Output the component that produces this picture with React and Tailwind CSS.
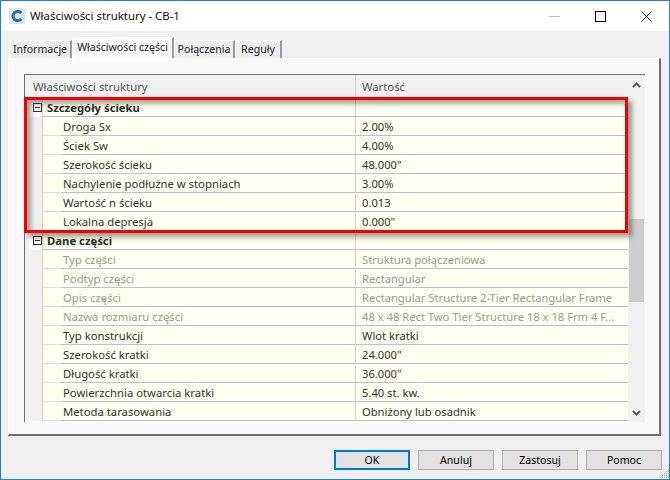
import React from 'react';

const detailRows = [
  ['Droga Sx', '2.00%'],
  ['Ściek Sw', '4.00%'],
  ['Szerokość ścieku', '48.000"'],
  ['Nachylenie podłużne w stopniach', '3.00%'],
  ['Wartość n ścieku', '0.013'],
  ['Lokalna depresja', '0.000"'],
];

const partRows = [
  ['Typ części', 'Struktura połączeniowa', true],
  ['Podtyp części', 'Rectangular', true],
  ['Opis części', 'Rectangular Structure 2-Tier Rectangular Frame', true],
  ['Nazwa rozmiaru części', '48 x 48 Rect Two Tier Structure 18 x 18 Frm 4 F...', true],
  ['Typ konstrukcji', 'Wlot kratki'],
  ['Szerokość kratki', '24.000"'],
  ['Długość kratki', '36.000"'],
  ['Powierzchnia otwarcia kratki', '5.40 st. kw.'],
  ['Metoda tarasowania', 'Obniżony lub osadnik'],
];

const tabs = [
  { label: 'Informacje', cls: 'w-[63px] h-[18px] ml-[1px] bg-[#eeeeee]' },
  { label: 'Właściwości części', cls: 'w-[102px] h-[21px] bg-[#f9f9f9]' },
  { label: 'Połączenia', cls: 'w-[61px] h-[18px] bg-[#eeeeee]' },
  { label: 'Reguły', cls: 'w-[47px] h-[18px] bg-[#eeeeee]' },
];

function GroupRow({ label }) {
  return (
    <div className="flex h-[19px]">
      <div className="w-[17px] flex justify-end bg-[#f0f0f0] shrink-0">
        <div className="w-[13px] flex items-center justify-end bg-[#fafafa]">
          <div className="w-[9px] h-[9px] border border-[#333] flex items-center justify-center">
            <div className="w-[5px] h-[1px] bg-[#333]" />
          </div>
        </div>
      </div>
      <div className="flex-1 min-w-0 flex border-b border-[#b9b9ff] bg-[#fffff0] border-l border-l-[#ffc0c0]">
        <div className="w-[312px] pl-[4px] pt-[1px] font-bold text-[#2b2b2b] leading-[18px]">{label}</div>
        <div className="flex-1 border-l border-[#ffc0c0]" />
      </div>
    </div>
  );
}

function PropRow({ name, value, dim }) {
  const text = dim ? 'text-[#9a9a9a]' : 'text-[#333]';
  return (
    <div className="flex h-[19px]">
      <div className="w-[17px] bg-[#f0f0f0] shrink-0" />
      <div className="flex-1 min-w-0 flex bg-[#fffff0] border-l border-[#ffc0c0]">
        <div className="w-[18px] border-b border-[#dcdcff] shrink-0" />
        <div className={`w-[294px] pl-[2px] pt-[1px] border-b border-[#b9b9ff] leading-[18px] whitespace-nowrap ${text}`}>{name}</div>
        <div className={`flex-1 min-w-0 border-l border-l-[#ffc0c0] border-b border-b-[#b9b9ff] pl-[6px] pt-[1px] text-[11.2px] leading-[18px] whitespace-nowrap overflow-hidden ${text}`}>{value}</div>
      </div>
    </div>
  );
}

function Chevron({ up }) {
  return (
    <svg width="9" height="6" viewBox="0 0 9 6" fill="none" stroke="#606060" strokeWidth="2">
      <path d={up ? 'M1 5 L4.5 1.5 L8 5' : 'M1 1 L4.5 4.5 L8 1'} />
    </svg>
  );
}

function DialogButton({ label, primary }) {
  const cls = primary
    ? 'border-2 border-[#0078d7]'
    : 'border border-[#adadad]';
  return (
    <button className={`w-[76px] h-[20px] bg-[#e1e1e1] text-black text-[10.6px] leading-none ${cls}`}>
      {label}
    </button>
  );
}

export default function App() {
  return (
    <div className="w-[670px] h-[480px] flex flex-col border border-[#1883d7] bg-[#f0f0f0] text-[11.3px] overflow-hidden relative font-['Noto_Sans','Open_Sans',sans-serif]">
      {/* title bar */}
      <div className="h-[30px] bg-white flex items-center shrink-0">
        <svg className="ml-[8px]" width="16" height="16" viewBox="0 0 16 16">
          <rect width="16" height="16" fill="#dbe7f0" />
          <path d="M12.2 5 A4.6 4.6 0 1 0 12.2 11" fill="none" stroke="#2b75a8" strokeWidth="3" />
        </svg>
        <span className="ml-[5px] text-[11.4px] text-[#111]">Właściwości struktury - CB-1</span>
        <div className="ml-auto flex items-center">
          <div className="w-[11px] h-[1px] bg-[#c4c4c4] mr-[35px]" />
          <div className="w-[11px] h-[11px] border border-black mr-[35px]" />
          <svg className="mr-[17px]" width="11" height="11" viewBox="0 0 11 11" stroke="#111" fill="none">
            <path d="M0.5 0.5 L10.5 10.5 M10.5 0.5 L0.5 10.5" />
          </svg>
        </div>
      </div>

      {/* tabs */}
      <div className="flex items-end h-[27px] pl-[7px] shrink-0">
        {tabs.map(t => (
          <div
            key={t.label}
            className={`flex items-center justify-center border-t border-l border-white border-r-2 border-r-[#9a9a9a] text-[#222] text-[10.6px] whitespace-nowrap ${t.cls}`}
          >
            {t.label}
          </div>
        ))}
      </div>

      {/* panel */}
      <div className="ml-[7px] mr-[8px] h-[378px] shrink-0 bg-[#f9f9f9] border-l border-t border-white border-r-2 border-b-2 border-r-[#6f6f6f] border-b-[#6f6f6f] pt-[15px] pl-[15px]">
        <div className="relative w-[621px] h-[348px] border-t border-l border-[#6f6f6f] flex">
          <div className="w-[603px] shrink-0 flex flex-col overflow-hidden">
            <div className="h-[23px] flex bg-[#f0f0f0] text-[#555] leading-[23px] shrink-0">
              <div className="w-[331px] pl-[8px] border-r border-[#d0d0d0]">Właściwości struktury</div>
              <div className="flex-1 pl-[6px]">Wartość</div>
            </div>
            <GroupRow label="Szczegóły ścieku" />
            {detailRows.map(r => <PropRow key={r[0]} name={r[0]} value={r[1]} />)}
            <GroupRow label="Dane części" />
            {partRows.map(r => <PropRow key={r[0]} name={r[0]} value={r[1]} dim={r[2]} />)}
          </div>

          {/* scrollbar */}
          <div className="w-[17px] bg-[#f0f0f0] flex flex-col items-center justify-between pt-[7px] pb-[6px] relative">
            <Chevron up />
            <Chevron />
            <div className="absolute left-[1px] right-[1px] top-[144px] h-[83px] bg-[#cdcdcd]" />
          </div>

          {/* red highlight over the first group */}
          <div className="absolute left-[-1px] top-[22px] w-[604px] h-[136px] border-[3px] border-[#f00000] shadow-[4px_4px_5px_rgba(60,60,40,0.5),inset_4px_4px_5px_rgba(60,60,40,0.45)] pointer-events-none" />
        </div>
      </div>

      {/* footer buttons */}
      <div className="flex justify-end gap-[8px] pr-[7px] pt-[14px]">
        <DialogButton label="OK" primary />
        <DialogButton label="Anuluj" />
        <DialogButton label="Zastosuj" />
        <DialogButton label="Pomoc" />
      </div>

      {/* resize grip */}
      <svg className="absolute right-0 bottom-0" width="11" height="11" viewBox="0 0 11 11" stroke="#a0a0a0" strokeDasharray="1.4 1.4" fill="none">
        <path d="M11 1 L1 11 M11 3 L3 11 M11 5 L5 11 M11 7 L7 11 M11 9 L9 11" />
      </svg>
    </div>
  );
}
